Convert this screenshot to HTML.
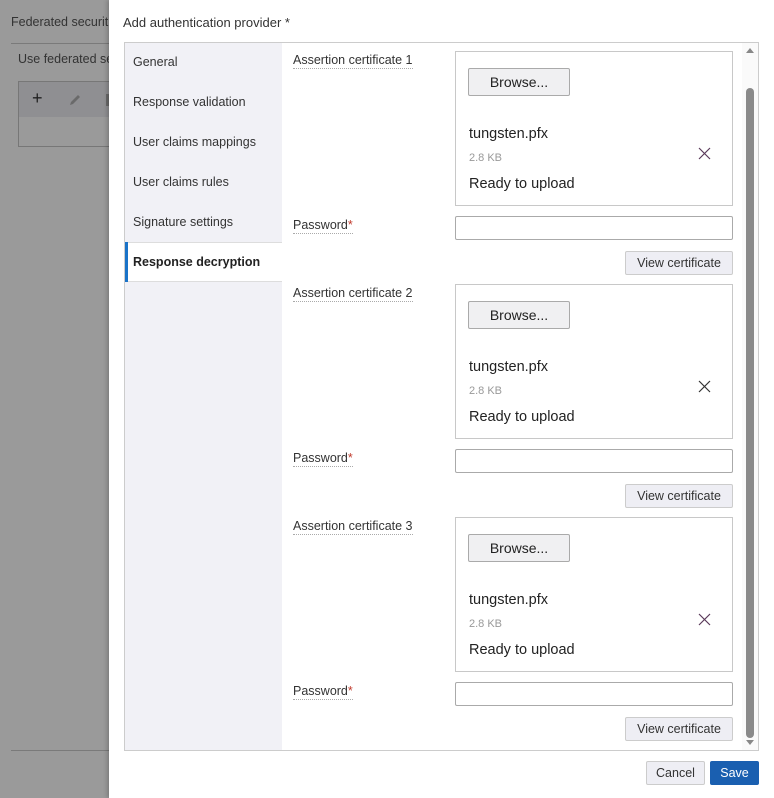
<!DOCTYPE html>
<html><head><meta charset="utf-8"><style>
*{box-sizing:border-box;margin:0;padding:0}
body{width:774px;height:798px;position:relative;overflow:hidden;background:#9a9a9a;font-family:"Liberation Sans",sans-serif;color:#333;font-size:12.5px}
.a{position:absolute}
.nav{position:absolute;left:125px;width:157px;background:#f1f1f6}
.ni{position:absolute;left:133px;font-size:12.5px;color:#333}
.lbl{position:absolute;left:293px;font-size:12.5px;color:#333;border-bottom:1px dotted #aaa;line-height:15px}
.box{position:absolute;left:455px;width:278px;height:155px;border:1px solid #c8c8c8;background:#fff}
.br{position:absolute;left:12px;top:16px;width:102px;height:28px;border:1px solid #aaa;background:#f0f0f2;border-radius:2px;text-align:center;line-height:26px;font-size:14px;color:#222}
.fn{position:absolute;left:13px;top:74px;font-size:14.5px;color:#222}
.sz{position:absolute;left:13px;top:100px;font-size:11px;color:#999}
.rd{position:absolute;left:13px;top:124px;font-size:14.5px;color:#222}
.x{position:absolute;left:242px;top:95px}
.inp{position:absolute;left:455px;width:278px;height:24px;border:1px solid #aaa;border-radius:2px;background:#fff}
.vc{position:absolute;left:625px;width:108px;height:24px;border:1px solid #ccc;border-radius:2px;background:#eeeef4;font-size:12.5px;text-align:center;line-height:22px;color:#333}
.req{color:#c0392b}
</style></head><body>
<div class="a" style="left:11px;top:15px;font-size:12.5px;color:#333">Federated securit</div>
<div class="a" style="left:11px;top:43px;width:100px;height:1px;background:#7a7a7a"></div>
<div class="a" style="left:18px;top:52px;font-size:12.5px;color:#333">Use federated se</div>
<div class="a" style="left:18px;top:81px;width:95px;height:66px;border:1px solid #777"></div>
<div class="a" style="left:19px;top:82px;width:95px;height:35px;background:#8f8f92"></div>
<div class="a" style="left:32px;top:88px;font-size:18px;color:#222">+</div>
<svg class="a" style="left:68px;top:93px" width="14" height="14" viewBox="0 0 14 14"><path d="M2 12 L3 9 L10 2 L12 4 L5 11 Z" fill="#6a6a6a"/></svg>
<div class="a" style="left:106px;top:94px;width:4px;height:12px;background:#6a6a6a"></div>
<div class="a" style="left:11px;top:750px;width:100px;height:1px;background:#7a7a7a"></div>

<div class="a" style="left:109px;top:0;width:665px;height:798px;background:#fff;box-shadow:-2px 0 4px rgba(0,0,0,.2)"></div>
<div class="a" style="left:123px;top:15px;font-size:13px;color:#333">Add authentication provider *</div>
<div class="a" style="left:124px;top:42px;width:635px;height:709px;border:1px solid #ccc"></div>
<div class="nav" style="top:43px;height:199px"></div>
<div class="nav" style="top:281px;height:469px;border-top:1px solid #ddd"></div>
<div class="a" style="left:125px;top:242px;width:157px;height:1px;background:#ddd"></div>
<div class="a" style="left:125px;top:242px;width:3px;height:40px;background:#1a73c8"></div>
<div class="ni" style="top:55px">General</div>
<div class="ni" style="top:95px">Response validation</div>
<div class="ni" style="top:135px">User claims mappings</div>
<div class="ni" style="top:175px">User claims rules</div>
<div class="ni" style="top:215px">Signature settings</div>
<div class="ni" style="top:255px;font-weight:bold;color:#222">Response decryption</div>

<div class="a" style="left:742px;top:43px;width:16px;height:707px;background:#fafafa"></div>
<svg class="a" style="left:745px;top:46px" width="10" height="8"><path d="M1 7 L5 2 L9 7Z" fill="#888"/></svg>
<div class="a" style="left:746px;top:88px;width:8px;height:650px;background:#8a8a8a;border-radius:4px"></div>
<svg class="a" style="left:745px;top:739px" width="10" height="8"><path d="M1 1 L5 6 L9 1Z" fill="#888"/></svg>

<div class="lbl" style="top:53px">Assertion certificate 1</div>
<div class="box" style="top:51px"><div class="br">Browse...</div><div class="fn">tungsten.pfx</div><div class="sz">2.8 KB</div><div class="rd">Ready to upload</div><svg class="x" width="13" height="13"><path d="M1 1L12 12M12 1L1 12" stroke="#5a3a5a" stroke-width="1.2"/></svg></div>
<div class="lbl" style="top:218px">Password<span class="req">*</span></div>
<div class="inp" style="top:216px"></div>
<div class="vc" style="top:251px">View certificate</div>

<div class="lbl" style="top:286px">Assertion certificate 2</div>
<div class="box" style="top:284px"><div class="br">Browse...</div><div class="fn">tungsten.pfx</div><div class="sz">2.8 KB</div><div class="rd">Ready to upload</div><svg class="x" width="13" height="13"><path d="M1 1L12 12M12 1L1 12" stroke="#333" stroke-width="1.2"/></svg></div>
<div class="lbl" style="top:451px">Password<span class="req">*</span></div>
<div class="inp" style="top:449px"></div>
<div class="vc" style="top:484px">View certificate</div>

<div class="lbl" style="top:519px">Assertion certificate 3</div>
<div class="box" style="top:517px"><div class="br">Browse...</div><div class="fn">tungsten.pfx</div><div class="sz">2.8 KB</div><div class="rd">Ready to upload</div><svg class="x" width="13" height="13"><path d="M1 1L12 12M12 1L1 12" stroke="#5a3a5a" stroke-width="1.2"/></svg></div>
<div class="lbl" style="top:684px">Password<span class="req">*</span></div>
<div class="inp" style="top:682px"></div>
<div class="vc" style="top:717px">View certificate</div>

<div class="a" style="left:646px;top:761px;width:59px;height:24px;border:1px solid #ccc;border-radius:2px;background:#eeeef4;text-align:center;line-height:22px;font-size:12.5px;color:#333">Cancel</div>
<div class="a" style="left:710px;top:761px;width:49px;height:24px;border-radius:2px;background:#1a5fb0;text-align:center;line-height:24px;font-size:12.5px;color:#fff">Save</div>
</body></html>
